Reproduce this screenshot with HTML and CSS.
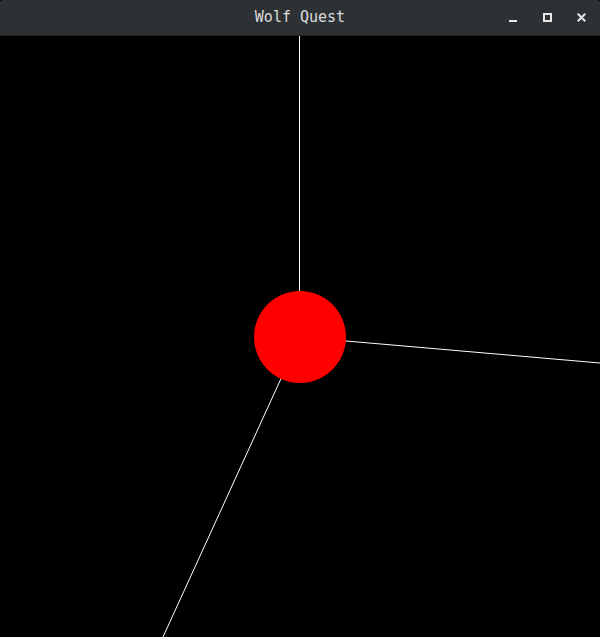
FILE: index.html
```html
<!DOCTYPE html>
<html>
<head>
<meta charset="utf-8">
<link rel="stylesheet" href="styles.css">
</head>
<body>
<div class="window">
  <header class="titlebar">
    <div class="spacer"></div>
    <div class="title">Wolf Quest</div>
    <div class="controls">
      <span class="btn min"></span>
      <span class="btn max"></span>
      <span class="btn close">
        <svg width="9" height="9" viewBox="0 0 9 9"><path d="M0.8 0.8L8.2 8.2M8.2 0.8L0.8 8.2" stroke="#e8e8e8" stroke-width="2"/></svg>
      </span>
    </div>
  </header>
  <svg class="canvas" width="600" height="601" viewBox="0 0 600 601">
    <line x1="299.5" y1="0" x2="299.5" y2="301" stroke="#fff" stroke-width="1"/>
    <line x1="300" y1="301" x2="600" y2="327" stroke="#fff" stroke-width="1"/>
    <line x1="300" y1="301" x2="163" y2="601" stroke="#fff" stroke-width="1"/>
    <circle cx="300" cy="301" r="46" fill="#ff0000"/>
  </svg>
</div>
</body>
</html>
```
FILE: styles.css
```css
html, body {
  margin: 0;
  padding: 0;
  background: #000;
  overflow: hidden;
}
.window {
  width: 600px;
  height: 637px;
  display: flex;
  flex-direction: column;
  background: #000;
}
.titlebar {
  height: 35px;
  border-bottom: 1px solid #1c1e20;
  background: #2d3134;
  border-radius: 3px 3px 0 0;
  display: grid;
  grid-template-columns: 1fr auto 1fr;
  align-items: center;
  font-family: "DejaVu Sans Mono", monospace;
  font-size: 15px;
  color: #dcdcdc;
}
.title {
  line-height: 35px;
}
.controls {
  display: flex;
  justify-content: flex-end;
  align-items: center;
  padding-right: 14px;
}
.btn {
  width: 9px;
  height: 9px;
  box-sizing: border-box;
  display: block;
  position: relative;
}
.min {
  margin-right: 25px;
}
.min::after {
  content: "";
  position: absolute;
  left: 0;
  bottom: 0;
  width: 8px;
  height: 2px;
  background: #e8e8e8;
}
.max {
  border: 2px solid #e8e8e8;
  margin-right: 25px;
}
.close svg {
  display: block;
}
.canvas {
  display: block;
}
```
